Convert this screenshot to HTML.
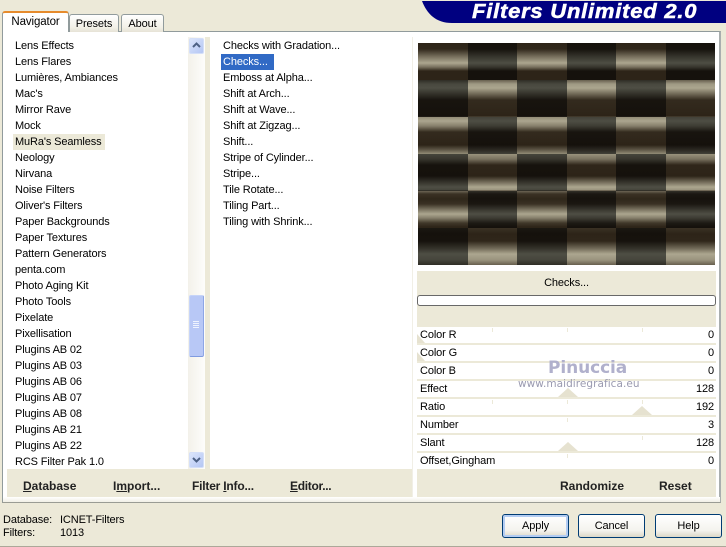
<!DOCTYPE html>
<html><head><meta charset="utf-8"><style>
*{box-sizing:border-box}
html,body{margin:0;padding:0}
body{width:726px;height:547px;background:#ece9d8;position:relative;overflow:hidden;font:11px/16px "Liberation Sans",sans-serif;letter-spacing:-.12px;color:#000}
.a{position:absolute}
.t{position:absolute;white-space:nowrap}
.panel{left:2px;top:31px;width:719px;height:472px;background:#fff;border:1px solid #919b9c;border-top-color:#919b9c;border-right:2px solid #a9aeae;border-bottom:2px solid #9a9c94}
.tab{position:absolute;border:1px solid #919b9c;border-bottom:0;border-radius:3px 3px 0 0;background:linear-gradient(#fff,#f3f1e8 70%,#e6e3d6);text-align:center}
.item{position:absolute;white-space:nowrap;height:16px;line-height:16px;padding-top:1px}
.beige{position:absolute;background:#ece9d8}
.row{position:absolute;left:417px;width:299px;height:16px;background:#fff;line-height:17px;padding-left:3px}
.row b{font-weight:normal;position:absolute;right:2px;top:0}
.tri{position:absolute;width:0;height:0;border-left:10px solid transparent;border-right:10px solid transparent;border-bottom:9px solid #e6e2d0}
.tick{position:absolute;width:1px;height:4px;background:#ece9d8}
.bb{position:absolute;font:bold 12px/16px "Liberation Sans",sans-serif;white-space:nowrap;color:#222;letter-spacing:0}
.btn{position:absolute;top:514px;width:67px;height:24px;border:1px solid #003c74;border-radius:3px;background:linear-gradient(#fff,#f4f3ee 70%,#dcd8c8);text-align:center;line-height:22px}
.sb{position:absolute;left:189px;width:15px;height:16px;border-radius:2px;background:linear-gradient(135deg,#dbe5fb,#b4c6f4);border:1px solid #d4dff8}
#pv{left:418px;top:43px;width:297px;height:222px;display:grid;grid-template-columns:50px 49px 50px 49px 50px 49px;grid-template-rows:repeat(6,37px);background:#000}
#pv i{display:block}
.A{--c:172,166,143;background-color:#2d2418}
.B{--c:78,78,68;background-color:#15110c}
.r1{background-image:linear-gradient(rgba(var(--c),0) 0,rgba(var(--c),.02) 6px,rgba(var(--c),.6) 14px,rgba(var(--c),1) 20px,rgba(var(--c),.6) 24px,rgba(var(--c),0) 28px,rgba(var(--c),0) 37px)}
.r2{background-image:linear-gradient(rgba(var(--c),.45) 0,rgba(var(--c),.9) 4px,rgba(var(--c),1) 8px,rgba(var(--c),.6) 13px,rgba(var(--c),.05) 20px,rgba(var(--c),0) 36px,rgba(var(--c),.3) 37px)}
.r3{background-image:linear-gradient(rgba(var(--c),.8) 0,rgba(var(--c),1) 4px,rgba(var(--c),.7) 9px,rgba(var(--c),.05) 15px,rgba(var(--c),0) 28px,rgba(var(--c),.4) 33px,rgba(var(--c),.8) 37px)}
.r4{background-image:linear-gradient(rgba(var(--c),.85) 0,rgba(var(--c),.6) 5px,rgba(var(--c),.02) 11px,rgba(var(--c),0) 22px,rgba(var(--c),.45) 27px,rgba(var(--c),1) 33px,rgba(var(--c),.85) 36px,rgba(var(--c),.2) 37px)}
.r5{background-image:linear-gradient(rgba(var(--c),.5) 0,rgba(var(--c),.1) 3px,rgba(var(--c),.02) 8px,rgba(var(--c),.1) 13px,rgba(var(--c),.65) 19px,rgba(var(--c),1) 23px,rgba(var(--c),.7) 27px,rgba(var(--c),.15) 32px,rgba(var(--c),0) 36px)}
.r6{background-image:linear-gradient(rgba(var(--c),.1) 0,rgba(var(--c),0) 6px,rgba(var(--c),.02) 13px,rgba(var(--c),.5) 20px,rgba(var(--c),1) 26px,rgba(var(--c),.85) 32px,rgba(var(--c),.45) 37px)}
</style></head><body>

<svg class="a" style="left:422px;top:0" width="304" height="23"><path d="M0 1H304V23H30C14 23 5 14 0 1Z" fill="#000080"/></svg>
<div class="t" style="left:472px;top:1px;font:italic bold 20px/22px 'Liberation Sans',sans-serif;letter-spacing:.7px;color:#fff;-webkit-text-stroke:.5px #fff;transform:scaleX(1.1);transform-origin:0 0">Filters Unlimited 2.0</div>

<div class="a panel"></div>
<div class="tab" style="left:69px;top:14px;width:50px;height:18px;line-height:18px">Presets</div>
<div class="tab" style="left:121px;top:14px;width:43px;height:18px;line-height:18px">About</div>
<div class="tab" style="left:2px;top:11px;width:67px;height:21px;background:#fff;border-top:2px solid #e68b2c;border-bottom:0;line-height:18px;z-index:2;font-size:11.5px">Navigator</div>

<div class="beige" style="left:205px;top:37px;width:5px;height:432px"></div>
<div class="beige" style="left:412px;top:37px;width:1px;height:460px;background:#f1efe6"></div>

<div class="item" style="left:15px;top:37px">Lens Effects</div>
<div class="item" style="left:15px;top:53px">Lens Flares</div>
<div class="item" style="left:15px;top:69px">Lumières, Ambiances</div>
<div class="item" style="left:15px;top:85px">Mac's</div>
<div class="item" style="left:15px;top:101px">Mirror Rave</div>
<div class="item" style="left:15px;top:117px">Mock</div>
<div class="item" style="left:13px;top:134px;width:92px;background:#ece9d8;padding:0 0 0 2px;line-height:16px">MuRa's Seamless</div>
<div class="item" style="left:15px;top:149px">Neology</div>
<div class="item" style="left:15px;top:165px">Nirvana</div>
<div class="item" style="left:15px;top:181px">Noise Filters</div>
<div class="item" style="left:15px;top:197px">Oliver's Filters</div>
<div class="item" style="left:15px;top:213px">Paper Backgrounds</div>
<div class="item" style="left:15px;top:229px">Paper Textures</div>
<div class="item" style="left:15px;top:245px">Pattern Generators</div>
<div class="item" style="left:15px;top:261px">penta.com</div>
<div class="item" style="left:15px;top:277px">Photo Aging Kit</div>
<div class="item" style="left:15px;top:293px">Photo Tools</div>
<div class="item" style="left:15px;top:309px">Pixelate</div>
<div class="item" style="left:15px;top:325px">Pixellisation</div>
<div class="item" style="left:15px;top:341px">Plugins AB 02</div>
<div class="item" style="left:15px;top:357px">Plugins AB 03</div>
<div class="item" style="left:15px;top:373px">Plugins AB 06</div>
<div class="item" style="left:15px;top:389px">Plugins AB 07</div>
<div class="item" style="left:15px;top:405px">Plugins AB 08</div>
<div class="item" style="left:15px;top:421px">Plugins AB 21</div>
<div class="item" style="left:15px;top:437px">Plugins AB 22</div>
<div class="item" style="left:15px;top:453px">RCS Filter Pak 1.0</div>

<div class="a" style="left:188px;top:37px;width:17px;height:432px;background:linear-gradient(90deg,#f3f1ea,#fdfdfb)"></div>
<div class="sb" style="top:38px"><svg width="13" height="14" style="display:block"><path d="M3 8L6.5 4.5L10 8" fill="none" stroke="#4d6185" stroke-width="2"/></svg></div>
<div class="sb" style="top:452px"><svg width="13" height="14" style="display:block"><path d="M3 5L6.5 8.5L10 5" fill="none" stroke="#4d6185" stroke-width="2"/></svg></div>
<div class="a" style="left:189px;top:295px;width:15px;height:62px;background:#b8c8f6;border:1px solid #c6d4f8;border-right-color:#8ea6e6;border-bottom:1px solid #7f9be0;border-radius:2px"></div>
<svg class="a" style="left:192px;top:321px" width="8" height="8"><path d="M1 .5H7M1 2.5H7M1 4.5H7M1 6.5H7" stroke="#eef3fe" stroke-width="1"/></svg>

<div class="item" style="left:223px;top:37px">Checks with Gradation...</div>
<div class="item" style="left:221px;top:54px;width:53px;background:#316ac5;color:#fff;padding:0 0 0 2px">Checks...</div>
<div class="item" style="left:223px;top:69px">Emboss at Alpha...</div>
<div class="item" style="left:223px;top:85px">Shift at Arch...</div>
<div class="item" style="left:223px;top:101px">Shift at Wave...</div>
<div class="item" style="left:223px;top:117px">Shift at Zigzag...</div>
<div class="item" style="left:223px;top:133px">Shift...</div>
<div class="item" style="left:223px;top:149px">Stripe of Cylinder...</div>
<div class="item" style="left:223px;top:165px">Stripe...</div>
<div class="item" style="left:223px;top:181px">Tile Rotate...</div>
<div class="item" style="left:223px;top:197px">Tiling Part...</div>
<div class="item" style="left:223px;top:213px">Tiling with Shrink...</div>

<div class="a" id="pv">
<i class="r1 A"></i><i class="r1 B"></i><i class="r1 A"></i><i class="r1 B"></i><i class="r1 A"></i><i class="r1 B"></i>
<i class="r2 B"></i><i class="r2 A"></i><i class="r2 B"></i><i class="r2 A"></i><i class="r2 B"></i><i class="r2 A"></i>
<i class="r3 A"></i><i class="r3 B"></i><i class="r3 A"></i><i class="r3 B"></i><i class="r3 A"></i><i class="r3 B"></i>
<i class="r4 B"></i><i class="r4 A"></i><i class="r4 B"></i><i class="r4 A"></i><i class="r4 B"></i><i class="r4 A"></i>
<i class="r5 A"></i><i class="r5 B"></i><i class="r5 A"></i><i class="r5 B"></i><i class="r5 A"></i><i class="r5 B"></i>
<i class="r6 B"></i><i class="r6 A"></i><i class="r6 B"></i><i class="r6 A"></i><i class="r6 B"></i><i class="r6 A"></i>
</div>

<div class="beige" style="left:417px;top:271px;width:299px;height:206px"></div>
<div class="t" style="left:417px;top:275px;width:299px;text-align:center">Checks...</div>
<div class="a" style="left:417px;top:295px;width:299px;height:11px;background:#fff;border:1px solid #686868;border-radius:3px"></div>

<div class="row" style="top:327px">Color R<b>0</b></div>
<div class="row" style="top:345px">Color G<b>0</b></div>
<div class="row" style="top:363px">Color B<b>0</b></div>
<div class="row" style="top:381px">Effect<b>128</b></div>
<div class="row" style="top:399px">Ratio<b>192</b></div>
<div class="row" style="top:417px">Number<b>3</b></div>
<div class="row" style="top:435px">Slant<b>128</b></div>
<div class="row" style="top:453px">Offset,Gingham<b>0</b></div>

<div class="tri" style="left:417px;top:334px;border-left-width:0;border-right-width:8px"></div>
<div class="tri" style="left:417px;top:352px;border-left-width:0;border-right-width:8px"></div>
<div class="tick" style="left:492px;top:328px"></div><div class="tick" style="left:567px;top:328px"></div><div class="tick" style="left:642px;top:328px"></div>
<div class="tick" style="left:492px;top:400px"></div><div class="tick" style="left:567px;top:400px"></div><div class="tick" style="left:642px;top:400px"></div>
<div class="tick" style="left:567px;top:418px"></div><div class="tick" style="left:567px;top:454px"></div><div class="tick" style="left:642px;top:436px"></div>
<div class="tri" style="left:558px;top:388px"></div>
<div class="tri" style="left:632px;top:406px"></div>
<div class="tri" style="left:558px;top:442px"></div>

<div class="t" style="left:548px;top:357px;font:bold 17px/22px 'DejaVu Sans',sans-serif;letter-spacing:-.1px;color:#b0b0cc">Pinuccia</div>
<div class="t" style="left:518px;top:377px;font:10.5px/14px 'DejaVu Sans',sans-serif;color:#9a9ab0;letter-spacing:.05px">www.maidiregrafica.eu</div>

<div class="beige" style="left:7px;top:469px;width:405px;height:28px"></div>
<div class="beige" style="left:417px;top:469px;width:299px;height:28px"></div>
<div class="a" style="left:3px;top:497px;width:717px;height:5px;background:linear-gradient(#fff,#f1efe6)"></div>
<div class="bb" style="left:23px;top:478px"><u>D</u>atabase</div>
<div class="bb" style="left:113px;top:478px">I<u>m</u>port...</div>
<div class="bb" style="left:192px;top:478px;letter-spacing:-.2px">Filter <u>I</u>nfo...</div>
<div class="bb" style="left:290px;top:478px;letter-spacing:-.3px"><u>E</u>ditor...</div>
<div class="bb" style="left:560px;top:478px">Randomize</div>
<div class="bb" style="left:659px;top:478px">Reset</div>

<div class="t" style="left:3px;top:512px">Database:</div>
<div class="t" style="left:60px;top:512px">ICNET-Filters</div>
<div class="t" style="left:3px;top:525px">Filters:</div>
<div class="t" style="left:60px;top:525px">1013</div>

<div class="btn" style="left:502px;box-shadow:inset 0 0 0 2px #b3ccf2">Apply</div>
<div class="btn" style="left:578px">Cancel</div>
<div class="btn" style="left:655px">Help</div>
<div class="a" style="left:0;top:546px;width:726px;height:1px;background:#aca899"></div>
</body></html>
